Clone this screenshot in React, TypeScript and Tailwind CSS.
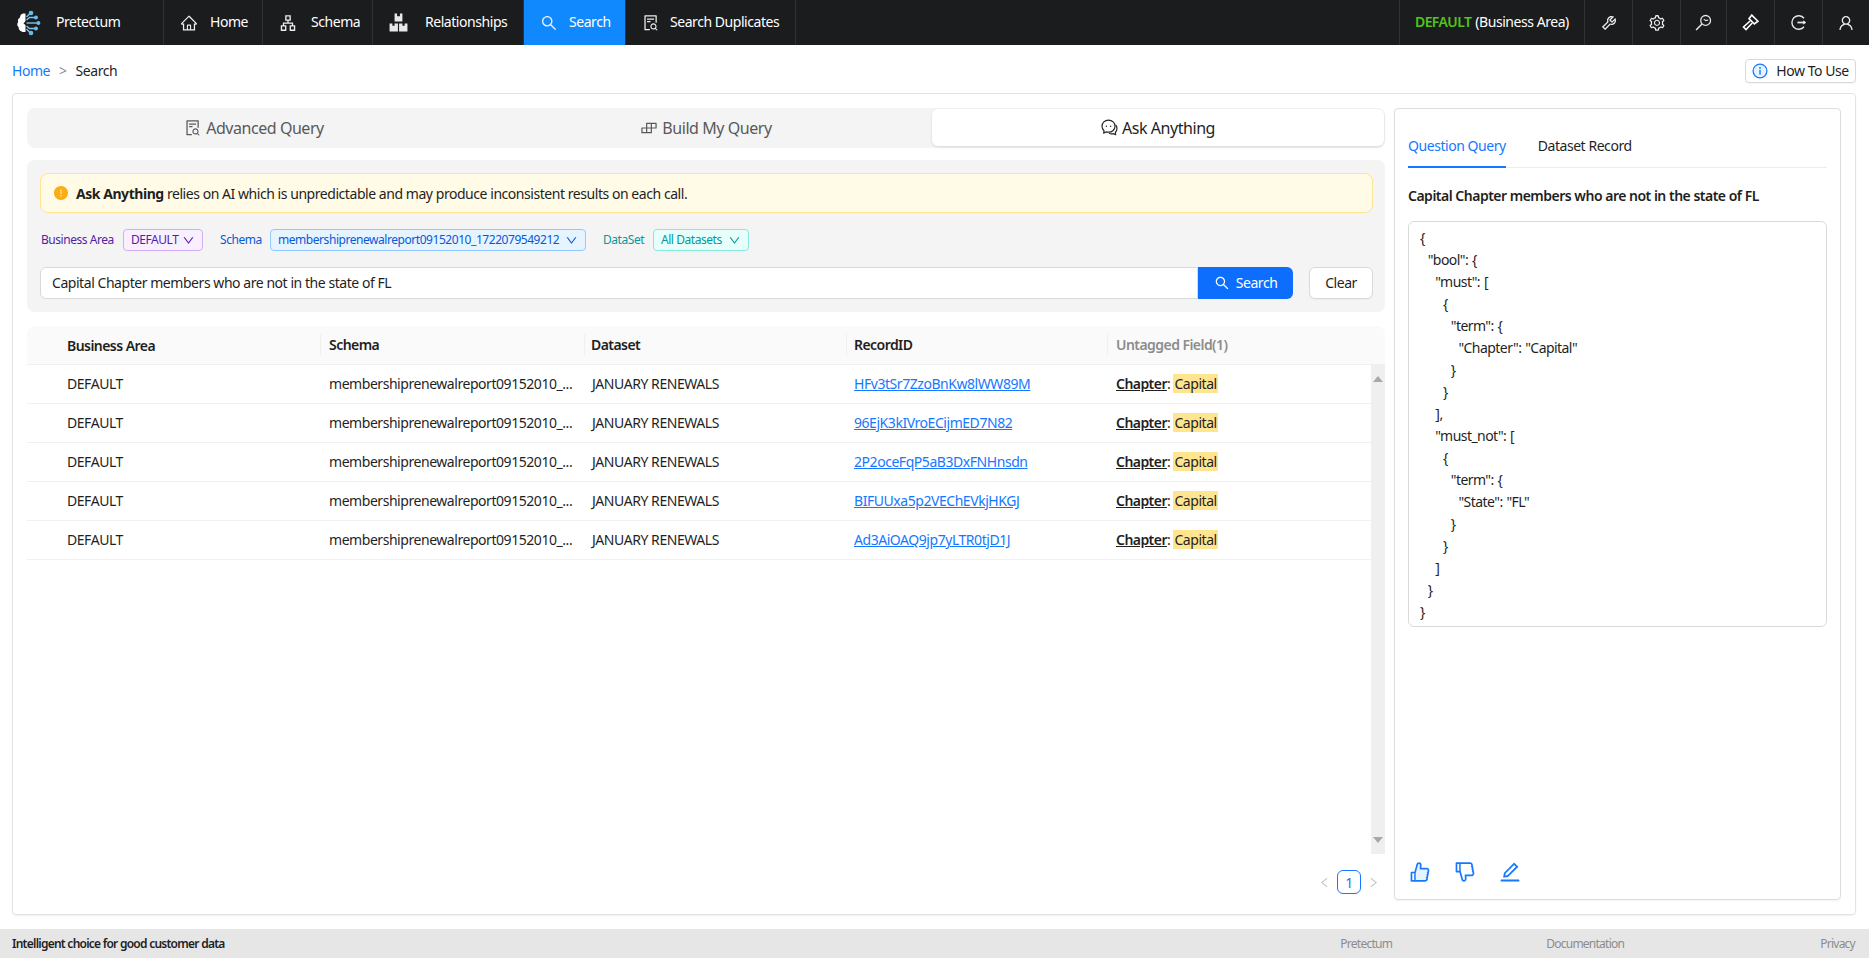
import type { ReactNode } from "react";
import {
  AiFillExclamationCircle,
  AiOutlineApartment,
  AiOutlineBuild,
  AiOutlineDislike,
  AiOutlineDown,
  AiOutlineEdit,
  AiOutlineFileSearch,
  AiOutlineHome,
  AiOutlineLeft,
  AiOutlineRight,
  AiOutlineSearch,
  AiOutlineSetting,
  AiOutlineTool,
  AiOutlineUser,
} from "react-icons/ai";

function Logo() {
  return (
    <svg width="26" height="26" viewBox="0 0 26 26" fill="none">
      <path d="M9 3.5 C6 3.5 5 6 5 7.5 C3 8.5 2.5 10.5 3.2 12 C1.8 13.6 2 16 3.6 17 C3.6 19.6 5.5 22 9 22 L10.5 22 L10.5 15 L8.5 13.5 L10.5 11 L10.5 3.5 Z" fill="#fff" />
      <g stroke="#7cc4ee" strokeWidth="1.4">
        <path d="M11.5 13 H23" />
        <path d="M11.5 10 L14.5 7.5 H20" />
        <path d="M11.5 16 L14.5 18.5 H20" />
        <path d="M11.5 7 L15 3.5" />
        <path d="M11.5 19 L15 22.5" />
      </g>
      <g fill="#6db9e8">
        <circle cx="16" cy="3" r="2.3" />
        <circle cx="21" cy="7.5" r="2" />
        <circle cx="23.4" cy="13" r="2" />
        <circle cx="21" cy="18.5" r="2" />
        <circle cx="16" cy="23" r="2.3" />
      </g>
    </svg>
  );
}

function RelationshipsIcon() {
  return (
    <svg width="19" height="19" viewBox="0 0 17 17" fill="#e8e8e8">
      <path d="M5 0.5 H7.2 V3 H9.8 V0.5 H12 V7.5 H5 Z" />
      <path d="M0.5 9.5 H3 V11.5 H5 V9.5 H8 V16.5 H0.5 Z" />
      <path d="M9 9.5 H12 V11.5 H14 V9.5 H16.5 V16.5 H9 Z" />
    </svg>
  );
}

function MonitorIcon() {
  return (
    <svg width="17" height="17" viewBox="0 0 16 16" fill="none" stroke="#e8e8e8" strokeWidth="1.2">
      <circle cx="10" cy="6" r="4.6" />
      <path d="M6.6 9.4 L1 15" strokeWidth="1.4" />
      <path d="M8.2 4.8 L10.2 6.2 L12.4 5.6" strokeWidth="1" />
    </svg>
  );
}

function HammerIcon() {
  return (
    <svg width="17" height="17" viewBox="0 0 16 16" fill="none" stroke="#fff" strokeWidth="1.5">
      <path d="M9.2 1 L15 6.8 L11.6 9.4 L6.6 4.4 Z" />
      <path d="M7.6 6.6 L1.4 12.2 L3.8 14.6 L9.6 8.4" />
    </svg>
  );
}

function ExitIcon() {
  return (
    <svg width="17" height="17" viewBox="0 0 16 16" fill="none" stroke="#e8e8e8" strokeWidth="1.3">
      <path d="M13.2 4 A6.4 6.4 0 1 0 13.2 12" />
      <path d="M7 8 H14" strokeWidth="1.6" />
      <path d="M12.6 6.4 L15 8 L12.6 9.6 Z" fill="#e8e8e8" strokeWidth="0.5" />
    </svg>
  );
}

function ChatIcon() {
  return (
    <svg width="17" height="17" viewBox="0 0 17 17" fill="none" stroke="#262626" strokeWidth="1.2">
      <path d="M7.5 1.2 C3.8 1.2 1 3.8 1 7.2 C1 9 1.8 10.6 3 11.7 L2.8 14 L5.2 12.9 C5.9 13.1 6.7 13.2 7.5 13.2 C11.2 13.2 14 10.6 14 7.2 C14 3.8 11.2 1.2 7.5 1.2 Z" />
      <path d="M14.6 6 C15.5 7 16 8.2 16 9.6 C16 11 15.4 12.3 14.4 13.2 L14.6 15.6 L12.2 14.6 C10.8 15 9.2 14.8 8 14.2" />
      <circle cx="5.3" cy="7.2" r="0.7" fill="#262626" stroke="none" />
      <circle cx="9.7" cy="7.2" r="0.7" fill="#262626" stroke="none" />
    </svg>
  );
}

function InfoIcon() {
  return (
    <svg width="16" height="16" viewBox="0 0 16 16">
      <circle cx="8" cy="8" r="6.9" fill="#e6f4ff" stroke="#1677ff" strokeWidth="1.3" />
      <circle cx="8" cy="4.9" r="0.9" fill="#1677ff" />
      <rect x="7.3" y="6.8" width="1.4" height="4.8" fill="#1677ff" />
    </svg>
  );
}

function LikeIcon() {
  return (
    <svg width="24" height="24" viewBox="0 0 1024 1024">
      <path d="M329 565 L430 205 L500 175 L510 410 L820 420 L840 500 L810 600 L800 700 L780 800 L740 852 L329 852 Z" fill="#e6f4ff" />
      <path
        fill="#1677ff"
        d="M885.9 533.7c16.8-22.2 26.1-49.4 26.1-77.7 0-44.9-25.1-87.4-65.5-111.1a67.67 67.67 0 0 0-34.3-9.3H572.4l6-122.9c1.4-29.7-9.1-57.9-29.5-79.4A106.62 106.62 0 0 0 471 99.9c-52 0-98 35-111.8 85.1l-85.9 311H144c-17.7 0-32 14.3-32 32v364c0 17.7 14.3 32 32 32h601.3c9.2 0 18.2-1.8 26.5-5.4 47.6-20.3 78.3-66.8 78.3-118.4 0-12.6-1.8-25-5.4-37 16.8-22.2 26.1-49.4 26.1-77.7 0-12.6-1.8-25-5.4-37 16.8-22.2 26.1-49.4 26.1-77.7-.2-12.6-2-25.1-5.6-37.1zM184 852V568h81v284h-81zm636.4-353l-21.9 19 13.9 25.4a56.2 56.2 0 0 1 6.9 27.3c0 16.5-7.2 32.2-19.6 43l-21.9 19 13.9 25.4a56.2 56.2 0 0 1 6.9 27.3c0 16.5-7.2 32.2-19.6 43l-21.9 19 13.9 25.4a56.2 56.2 0 0 1 6.9 27.3c0 22.4-13.2 42.6-33.6 51.8H329V564.8l99.5-360.5a44.1 44.1 0 0 1 42.2-32.3c7.6 0 15.1 2.2 21.1 6.7 9.9 7.4 15.2 18.6 14.6 30.5l-9.6 198.4h314.4C829 418.5 840 436.9 840 456c0 16.5-7.2 32.1-19.6 43z"
      />
    </svg>
  );
}

function NavItem({ icon, label, width, gap, active }: { icon: ReactNode; label: string; width: string; gap: string; active?: boolean }) {
  return (
    <div className={`flex h-full items-center border-r border-[#303133] pl-[16px] text-white ${width} ${gap} ${active ? "bg-[#1089ff]" : ""}`}>
      <span className="flex items-center text-[18px] text-[#eeeeee]">{icon}</span>
      <span className="pb-[2px] whitespace-nowrap">{label}</span>
    </div>
  );
}

function NavIcon({ icon, width }: { icon: ReactNode; width: string }) {
  return <div className={`flex h-full items-center justify-center border-l border-[#303133] text-[#eeeeee] ${width}`}>{icon}</div>;
}

const rows = [
  "HFv3tSr7ZzoBnKw8lWW89M",
  "96EjK3kIVroECijmED7N82",
  "2P2oceFqP5aB3DxFNHnsdn",
  "BIFUUxa5p2VEChEVkjHKGJ",
  "Ad3AiOAQ9jp7yLTR0tjD1J",
];

const queryJson = `{
  "bool": {
    "must": [
      {
        "term": {
          "Chapter": "Capital"
        }
      }
    ],
    "must_not": [
      {
        "term": {
          "State": "FL"
        }
      }
    ]
  }
}`;

export default function App() {
  return (
    <div className="flex h-screen w-full flex-col overflow-hidden bg-white font-['Noto_Sans',sans-serif] text-[14px] tracking-[-0.45px] text-[#1f1f1f]">
      <header className="flex h-[45px] shrink-0 items-center justify-between bg-[#1b1c1e]">
        <div className="flex h-full items-center">
          <div className="flex h-full w-[164px] items-center gap-[15px] border-r border-[#303133] pl-[15px] text-white">
            <Logo />
            <span className="pb-[2px]">Pretectum</span>
          </div>
          <NavItem icon={<AiOutlineHome />} label="Home" width="w-[99px]" gap="gap-[12px]" />
          <NavItem icon={<AiOutlineApartment />} label="Schema" width="w-[110px]" gap="gap-[14px]" />
          <NavItem icon={<RelationshipsIcon />} label="Relationships" width="w-[151px]" gap="gap-[17px]" />
          <NavItem icon={<AiOutlineSearch />} label="Search" width="w-[102px]" gap="gap-[11px]" active />
          <NavItem icon={<AiOutlineFileSearch />} label="Search Duplicates" width="w-[170px]" gap="gap-[10px]" />
        </div>
        <div className="flex h-full items-center">
          <div className="flex h-full w-[185px] items-center border-l border-[#303133] pb-[2px] pl-[15px] whitespace-nowrap text-white">
            <span className="font-semibold tracking-[-0.6px] text-[#52c41a]">DEFAULT</span>
            <span className="ml-[4px]">(Business Area)</span>
          </div>
          <NavIcon icon={<AiOutlineTool className="text-[18px]" />} width="w-[48px]" />
          <NavIcon icon={<AiOutlineSetting className="text-[18px]" />} width="w-[48px]" />
          <NavIcon icon={<MonitorIcon />} width="w-[46px]" />
          <NavIcon icon={<HammerIcon />} width="w-[48px]" />
          <NavIcon icon={<ExitIcon />} width="w-[48px]" />
          <NavIcon icon={<AiOutlineUser className="text-[18px]" />} width="w-[47px]" />
        </div>
      </header>

      <main className="flex min-h-0 flex-1 flex-col pr-[13px] pl-[12px]">
        <div className="flex h-[48px] shrink-0 items-center justify-between pt-[3px]">
          <div className="flex items-center">
            <span className="text-[#1677ff]">Home</span>
            <span className="mx-[9px] text-[#8c8c8c]">&gt;</span>
            <span>Search</span>
          </div>
          <button className="flex h-[24px] w-[111px] items-center justify-center gap-[8px] rounded-[4px] border border-[#d9d9d9] bg-white shadow-[0_1px_0_rgba(0,0,0,0.03)]">
            <InfoIcon />
            How To Use
          </button>
        </div>

        <div className="mb-[14px] flex min-h-0 flex-1 gap-[9px] rounded-[4px] border border-[#e3e3e3] p-[14px] shadow-[0_1px_2px_rgba(0,0,0,0.06)]">
          <div className="flex w-[1358px] shrink-0 flex-col">
            <div className="grid h-[40px] shrink-0 grid-cols-[1fr_1fr_452px] rounded-[8px] bg-[#f4f4f4] px-[1px] pt-[1px] pb-[2px] text-[16px] text-[#595959]">
              <div className="flex items-center justify-center gap-[4px]">
                <AiOutlineFileSearch className="text-[18px]" />
                Advanced Query
              </div>
              <div className="flex items-center justify-center gap-[4px]">
                <AiOutlineBuild className="text-[18px]" />
                Build My Query
              </div>
              <div className="flex items-center justify-center gap-[4px] rounded-[6px] bg-white text-[#1f1f1f] shadow-[0_1px_3px_rgba(0,0,0,0.12)]">
                <ChatIcon />
                Ask Anything
              </div>
            </div>

            <div className="mt-[12px] shrink-0 rounded-[8px] bg-[#f4f4f4] py-[13px] pr-[12px] pl-[13px]">
              <div className="flex h-[40px] items-center gap-[7px] rounded-[8px] border border-[#ffe58f] bg-[#fffbe6] pl-[12px]">
                <AiFillExclamationCircle className="text-[16px] text-[#faad14]" />
                <span>
                  <b className="font-bold">Ask Anything</b> relies on AI which is unpredictable and may produce inconsistent results on each call.
                </span>
              </div>

              <div className="mt-[16px] flex h-[22px] items-center text-[12px]">
                <span className="ml-[1px] w-[82px] text-[#531dab]">Business Area</span>
                <span className="flex h-full w-[80px] items-center justify-between rounded-[4px] border border-[#d3adf7] bg-[#f9f0ff] px-[7px] text-[#531dab]">
                  DEFAULT <AiOutlineDown className="text-[13px]" />
                </span>
                <span className="ml-[17px] w-[50px] text-[#0958d9]">Schema</span>
                <span className="flex h-full w-[316px] items-center justify-between rounded-[4px] border border-[#91caff] bg-[#e6f4ff] px-[7px] text-[#0958d9]">
                  membershiprenewalreport09152010_1722079549212 <AiOutlineDown className="text-[13px]" />
                </span>
                <span className="ml-[17px] w-[50px] text-[#08979c]">DataSet</span>
                <span className="flex h-full w-[96px] items-center justify-between rounded-[4px] border border-[#87e8de] bg-[#e6fffb] px-[7px] text-[#08979c]">
                  All Datasets <AiOutlineDown className="text-[13px]" />
                </span>
              </div>

              <div className="mt-[16px] flex h-[32px] items-stretch">
                <div className="flex w-[1159px] items-center rounded-l-[6px] border border-[#d9d9d9] bg-white pb-[2px] pl-[11px]">
                  Capital Chapter members who are not in the state of FL
                </div>
                <button className="flex w-[95px] items-center justify-center gap-[6px] rounded-r-[6px] bg-[#0d6efd] pb-[1px] text-white">
                  <AiOutlineSearch className="text-[16px]" />
                  Search
                </button>
                <button className="ml-[16px] w-[64px] rounded-[6px] border border-[#d9d9d9] bg-white pb-[2px] shadow-[0_1px_0_rgba(0,0,0,0.03)]">Clear</button>
              </div>
            </div>

            <div className="mt-[14px] grid h-[39px] shrink-0 grid-cols-[293px_264px_262px_261px_278px] items-center rounded-t-[8px] border-b border-[#f0f0f0] bg-[#fafafa] font-semibold tracking-[-0.55px]">
              <div className="pl-[40px]">Business Area</div>
              <div className="border-l border-[#f0f0f0] pl-[8px] leading-[22px]">Schema</div>
              <div className="border-l border-[#f0f0f0] pl-[6px] leading-[22px]">Dataset</div>
              <div className="border-l border-[#f0f0f0] pl-[7px] leading-[22px]">RecordID</div>
              <div className="border-l border-[#f0f0f0] pl-[8px] leading-[22px] text-[#8c8c8c]">Untagged Field(1)</div>
            </div>

            <div className="flex h-[489px] shrink-0">
              <div className="min-w-0 flex-1">
                {rows.map((id) => (
                  <div key={id} className="grid h-[39px] grid-cols-[293px_264px_262px_261px_264px] items-center border-b border-[#f0f0f0] pb-[1px]">
                    <div className="pl-[40px]">DEFAULT</div>
                    <div className="pl-[9px] whitespace-nowrap">membershiprenewalreport09152010_...</div>
                    <div className="pl-[8px]">JANUARY RENEWALS</div>
                    <div className="pl-[8px]">
                      <a className="text-[#1677ff] underline">{id}</a>
                    </div>
                    <div className="pl-[9px]">
                      <span className="font-semibold tracking-[-0.55px] underline">Chapter</span>: <span className="bg-[#ffe58f] px-[1px]">Capital</span>
                    </div>
                  </div>
                ))}
              </div>
              <div className="flex w-[14px] shrink-0 flex-col items-center justify-between bg-[#efefef] py-[11px]">
                <div className="h-0 w-0 border-x-[5px] border-b-[6px] border-x-transparent border-b-[#a8a8a8]" />
                <div className="h-0 w-0 border-x-[5px] border-t-[6px] border-x-transparent border-t-[#a8a8a8]" />
              </div>
            </div>

            <div className="mt-[16px] mr-[5px] flex h-[24px] items-center justify-end gap-[6px] text-[#bfbfbf]">
              <AiOutlineLeft className="text-[13px]" />
              <span className="flex h-[24px] w-[24px] items-center justify-center rounded-[6px] border border-[#1677ff] text-[#1677ff]">1</span>
              <AiOutlineRight className="text-[13px]" />
            </div>
          </div>

          <aside className="flex min-w-0 flex-1 flex-col rounded-[4px] border border-[#dddddd] px-[13px] shadow-[0_1px_2px_rgba(0,0,0,0.05)]">
            <div className="mt-[15px] flex h-[44px] shrink-0 gap-[32px] border-b border-[#ededed]">
              <div className="relative flex items-center text-[#1677ff]">
                Question Query
                <span className="absolute right-0 -bottom-px left-0 h-[2px] bg-[#1677ff]" />
              </div>
              <div className="flex items-center">Dataset Record</div>
            </div>
            <div className="mt-[17px] shrink-0 font-semibold tracking-[-0.5px]">Capital Chapter members who are not in the state of FL</div>
            <pre className="mt-[15px] h-[406px] shrink-0 rounded-[6px] border border-[#d9d9d9] px-[11px] py-[5px] font-['Noto_Sans',sans-serif] leading-[22px] tracking-[-0.55px] [word-spacing:0.75px]">{queryJson}</pre>
            <div className="mt-auto mb-[15px] flex gap-[21px] text-[24px] text-[#1677ff]">
              <LikeIcon />
              <AiOutlineDislike />
              <AiOutlineEdit />
            </div>
          </aside>
        </div>
      </main>

      <footer className="flex h-[29px] shrink-0 items-center justify-between bg-[#e6e6e6] pr-[14px] pl-[12px] text-[12px] tracking-[-0.75px]">
        <span className="font-semibold">Intelligent choice for good customer data</span>
        <div className="flex text-[#8c8c8c]">
          <span>Pretectum</span>
          <span className="ml-[154px]">Documentation</span>
          <span className="ml-[196px]">Privacy</span>
        </div>
      </footer>
    </div>
  );
}
